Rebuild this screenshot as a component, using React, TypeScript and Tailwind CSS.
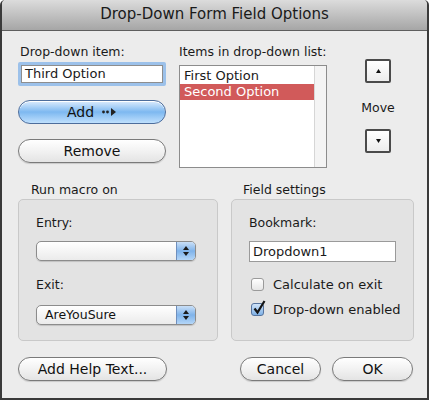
import type { ReactNode } from "react";

const font = { fontFamily: '"DejaVu Sans", "Liberation Sans", sans-serif' };

function PillButton({
  children,
  className = "",
  blue = false,
}: {
  children: ReactNode;
  className?: string;
  blue?: boolean;
}) {
  return (
    <div
      className={
        "flex items-center justify-center rounded-full border text-[14px] text-[#111] " +
        (blue
          ? "border-[#4d6d9c] bg-gradient-to-b from-[#dcecfd] via-[#7db8f0] to-[#bfe0fd] shadow-[inset_0_1px_0_#fff]"
          : "border-[#7a7a7a] bg-gradient-to-b from-[#ffffff] via-[#f2f2f2] to-[#e4e4e4] shadow-[0_1px_1px_rgba(0,0,0,0.15)]") +
        " " +
        className
      }
    >
      {children}
    </div>
  );
}

function Popup({ value }: { value?: string }) {
  return (
    <div className="flex h-[20px] w-[160px] overflow-hidden rounded-[5px] border border-[#8c8c8c] bg-gradient-to-b from-[#ffffff] to-[#ebebeb] shadow-[0_1px_1px_rgba(0,0,0,0.15)]">
      <div className="flex flex-1 items-center pl-[8px] text-[12.5px] text-[#111]">
        {value}
      </div>
      <div className="flex w-[19px] flex-col items-center justify-center gap-[2px] border-l border-[#6f8fbd] bg-gradient-to-b from-[#c9dff7] via-[#7fb3ea] to-[#b4d6f8]">
        <svg width="6" height="4" viewBox="0 0 6 4">
          <path d="M0 4 L3 0 L6 4 Z" fill="#1b1b1b" />
        </svg>
        <svg width="6" height="4" viewBox="0 0 6 4">
          <path d="M0 0 L6 0 L3 4 Z" fill="#1b1b1b" />
        </svg>
      </div>
    </div>
  );
}

function Checkbox({ checked }: { checked?: boolean }) {
  return (
    <div
      className={
        "relative h-[13px] w-[13px] rounded-[3px] border " +
        (checked
          ? "border-[#55739e] bg-gradient-to-b from-[#cfe3f8] to-[#7fb1e6]"
          : "border-[#9a9a9a] bg-gradient-to-b from-[#ffffff] to-[#e6e6e6]")
      }
    >
      {checked && (
        <svg
          className="absolute left-[1px] top-[-4px]"
          width="13"
          height="15"
          viewBox="0 0 13 15"
        >
          <path
            d="M1.5 8.5 L4.5 12.5 L11.5 1"
            stroke="#151515"
            strokeWidth="2.2"
            fill="none"
          />
        </svg>
      )}
    </div>
  );
}

function MoveButton({ up }: { up?: boolean }) {
  return (
    <div className="flex h-[24px] w-[26px] items-center justify-center rounded-[2px] border-2 border-[#4a4a4a] bg-gradient-to-b from-[#ffffff] to-[#ececec]">
      <svg width="5" height="4" viewBox="0 0 5 4">
        <path d={up ? "M0 4 L2.5 0 L5 4 Z" : "M0 0 L5 0 L2.5 4 Z"} fill="#111" />
      </svg>
    </div>
  );
}

export default function App() {
  return (
    <div
      className="h-[400px] w-[429px] overflow-hidden rounded-t-[5px] border-x-2 border-b-2 border-[#3a3a3a] bg-[#ececec] text-[#1a1a1a]"
      style={font}
    >
      {/* title bar */}
      <div className="flex h-[31px] items-center justify-center border-b border-[#5e5e5e] bg-gradient-to-b from-[#dcdcdc] to-[#a6a6a6] pb-[2px] text-[15px] text-[#1a1a1a]">
        Drop-Down Form Field Options
      </div>

      {/* top section */}
      <div className="flex h-[151px] pl-[16px] pt-[13px]">
        <div className="flex w-[148px] flex-col">
          <div className="h-[16px] pl-[2px] text-[12.5px] leading-[16px]">Drop-down item:</div>
          <div className="mt-[2px] h-[24px] rounded-[2px] border-[3px] border-[#9cc1ea] bg-white">
            <div className="flex h-full items-center border border-[#8e8e8e] pl-[3px] text-[13px]">
              Third Option
            </div>
          </div>
          <PillButton blue className="mt-[14px] h-[24px] gap-[8px]">
            <span>Add</span>
            <svg width="15" height="8" viewBox="0 0 15 8">
              <circle cx="1.5" cy="4" r="1.4" fill="#222" />
              <circle cx="5.5" cy="4" r="1.4" fill="#222" />
              <path d="M9 0 L14 4 L9 8 Z" fill="#222" />
            </svg>
          </PillButton>
          <PillButton className="mt-[15px] h-[24px]">Remove</PillButton>
        </div>

        <div className="ml-[13px] flex w-[148px] flex-col">
          <div className="h-[16px] text-[12.5px] leading-[16px]">Items in drop-down list:</div>
          <div className="mt-[5px] flex h-[103px] border border-[#8c8c8c] bg-white">
            <div className="flex flex-1 flex-col pt-[2px] text-[13px] leading-[16px]">
              <div className="pl-[4px]">First Option</div>
              <div className="bg-[#d15a5a] pl-[4px] text-white">Second Option</div>
            </div>
            <div className="w-[12px] border-l border-[#d6d6d6] bg-[#f4f4f4]" />
          </div>
        </div>

        <div className="ml-[36px] flex w-[30px] flex-col items-center pt-[15px]">
          <MoveButton up />
          <div className="mt-[17px] text-[12.5px] leading-[16px]">Move</div>
          <div className="mt-[13px]">
            <MoveButton />
          </div>
        </div>
      </div>

      {/* group boxes */}
      <div className="flex gap-[13px] pl-[16px]">
        <div className="flex w-[200px] flex-col">
          <div className="h-[16px] pl-[13px] text-[12.5px] leading-[16px]">Run macro on</div>
          <div className="mt-[1px] flex h-[142px] flex-col rounded-[5px] border border-[#c9c9c9] bg-[#e3e3e3] pl-[17px] pt-[15px]">
            <div className="text-[12.5px] leading-[16px]">Entry:</div>
            <div className="mt-[10px]">
              <Popup />
            </div>
            <div className="mt-[16px] text-[12.5px] leading-[16px]">Exit:</div>
            <div className="mt-[12px]">
              <Popup value="AreYouSure" />
            </div>
          </div>
        </div>

        <div className="flex w-[183px] flex-col">
          <div className="h-[16px] pl-[12px] text-[12.5px] leading-[16px]">Field settings</div>
          <div className="mt-[1px] flex h-[142px] flex-col rounded-[5px] border border-[#c9c9c9] bg-[#e3e3e3] pl-[17px] pt-[15px]">
            <div className="text-[12.5px] leading-[16px]">Bookmark:</div>
            <div className="mt-[10px] flex h-[21px] w-[147px] items-center border border-[#9a9a9a] bg-white pl-[3px] text-[13px]">
              Dropdown1
            </div>
            <div className="mt-[13px] flex items-center gap-[9px] pl-[2px] text-[13px]">
              <Checkbox />
              <span>Calculate on exit</span>
            </div>
            <div className="mt-[5px] flex items-center gap-[9px] pl-[2px] text-[13px]">
              <Checkbox checked />
              <span>Drop-down enabled</span>
            </div>
          </div>
        </div>
      </div>

      {/* bottom buttons */}
      <div className="flex items-center pl-[16px] pr-[14px] pt-[16px]">
        <PillButton className="h-[24px] w-[149px]">Add Help Text...</PillButton>
        <div className="flex-1" />
        <PillButton className="h-[24px] w-[81px]">Cancel</PillButton>
        <PillButton className="ml-[11px] h-[24px] w-[81px]">OK</PillButton>
      </div>
    </div>
  );
}
